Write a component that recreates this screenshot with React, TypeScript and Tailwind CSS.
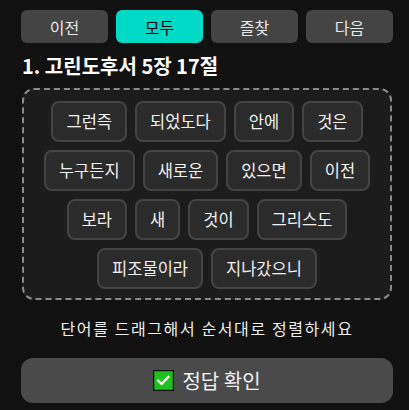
import { useState } from 'react'

const tabs = ['이전', '모두', '즐찾', '다음']

const words = [
  '그런즉', '되었도다', '안에', '것은',
  '누구든지', '새로운', '있으면', '이전',
  '보라', '새', '것이', '그리스도',
  '피조물이라', '지나갔으니',
]

function CheckBox() {
  return (
    <svg width="21" height="21" viewBox="0 0 21 21" className="shrink-0">
      <rect x="0.5" y="0.5" width="20" height="20" fill="#1fbf1f" stroke="#111" strokeWidth="1.5" />
      <path d="M5 10.5 L8.7 14 L15.5 6.8" fill="none" stroke="#fff" strokeWidth="2.4" strokeLinecap="round" strokeLinejoin="round" />
    </svg>
  )
}

export default function App() {
  const [active, setActive] = useState(1)

  return (
    <div
      className="w-[409px] h-[410px] bg-[#111111] pl-[21px] pr-[16px] pt-[10px] text-white overflow-hidden"
      style={{ fontFamily: '"Noto Sans CJK KR", "Noto Sans", sans-serif' }}
    >
      <div className="grid grid-cols-4 gap-2">
        {tabs.map((t, i) => (
          <button
            key={t}
            onClick={() => setActive(i)}
            className={
              i === active
                ? 'h-[33px] rounded-md bg-[#00d9c5] text-black text-[16px]'
                : 'h-[33px] rounded-md bg-[#444444] text-[#e8e8e8] text-[16px]'
            }
          >
            {t}
          </button>
        ))}
      </div>

      <h1 className="mt-[9px] text-[20px] leading-[28px] font-bold text-white pl-px">
        1. 고린도후서 5장 17절
      </h1>

      <div className="mt-[8px] ml-px mr-px h-[212px] rounded-xl border-2 border-dashed border-[#8a8a8a] bg-[#1c1c1c] px-3 pt-[11px]">
        <div className="flex flex-wrap justify-center gap-x-2 gap-y-2">
          {words.map((w, i) => (
            <div
              key={i}
              className="h-[41px] flex items-center px-[13px] rounded-lg border-2 border-[#444444] bg-[#2b2b2b] text-[16.5px] text-[#f0f0f0]"
            >
              {w}
            </div>
          ))}
        </div>
      </div>

      <p className="mt-[17px] text-center text-[16px] tracking-[1.6px] leading-[22px] text-[#eeeeee]">
        단어를 드래그해서 순서대로 정렬하세요
      </p>

      <button className="mt-[19px] w-full h-[45px] rounded-xl bg-[#4a4a4a] flex items-center justify-center gap-2 text-[20px] text-[#f0f0f0]">
        <CheckBox />
        <span>정답 확인</span>
      </button>
    </div>
  )
}
